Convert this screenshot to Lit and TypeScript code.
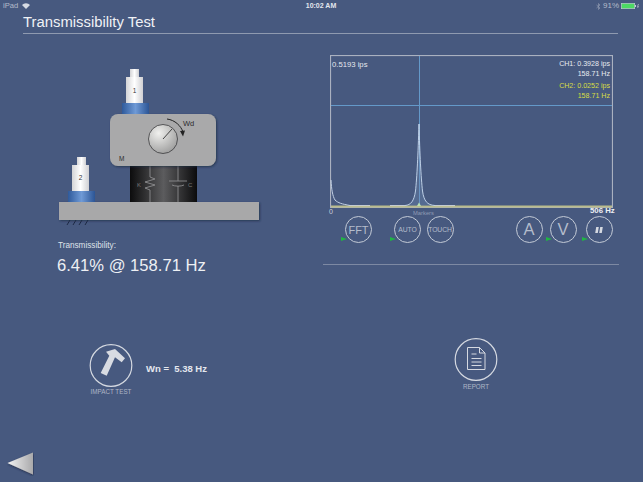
import { LitElement, html, css } from "lit";
import { customElement } from "lit/decorators.js";

const SANS = `"Liberation Sans", Arial, sans-serif`;

@customElement("app-root")
export class AppRoot extends LitElement {
  static styles = css`
    :host { display: block; width: 643px; height: 482px; background: #47597f; color: #fff; font-family: "Liberation Sans", Arial, sans-serif; overflow: hidden; position: relative; }
    .status { height: 12px; display: grid; grid-template-columns: 1fr auto 1fr; align-items: center; padding: 0 4px 0 3px; font-size: 7.6px; color: #b4bccb; line-height: 12px; }
    .status .l { display: flex; align-items: center; gap: 4px; }
    .status .c { color: #e4e7ee; font-weight: 700; font-size: 7px; }
    .status .r { display: flex; justify-content: flex-end; align-items: center; gap: 2px; }
    .status .pct { font-size: 8px; }
    .header { margin: 0 25px 0 23px; height: 21px; border-bottom: 1px solid #8f9ab0; font-size: 14.85px; line-height: 20px; color: #f0f2f6; }
    .main { display: grid; grid-template-columns: 323px 296px; }
    .left { display: flex; flex-direction: column; }
    .diagram { display: block; margin: 26px 0 0 50px; }
    .t-label { margin: 11px 0 0 58px; font-size: 8.2px; line-height: 10px; color: #dfe3ea; }
    .t-val { margin: 5px 0 0 57px; font-size: 16.6px; line-height: 20px; color: #eef0f4; }
    .impact { margin: 68px 0 0 89px; display: flex; align-items: center; }
    .impact .col { width: 44px; display: flex; flex-direction: column; align-items: center; }
    .cap { font-size: 6.3px; line-height: 8px; color: #aeb6c6; white-space: nowrap; margin-top: 1px; }
    .report .cap { margin-top: 2px; }
    .wn { margin: -3px 0 0 13px; font-size: 9.5px; font-weight: 700; color: #e4e7ee; white-space: pre; }
    .back { display: block; margin: 56px 0 0 7px; }
    .right { display: flex; flex-direction: column; }
    .chart { margin: 21px 0 0 7px; position: relative; width: 283px; height: 153px; }
    .chart svg { display: block; }
    .peak { position: absolute; left: 2px; top: 5px; font-size: 7.7px; color: #e4e7ee; }
    .read { position: absolute; right: 3px; top: 5px; text-align: right; font-size: 7.1px; line-height: 9.5px; color: #e8ebf0; }
    .read .y { margin-top: 3px; color: #d7dd45; }
    .axis { position: relative; height: 8px; font-size: 7px; line-height: 8px; width: 296px; }
    .axis span { position: absolute; top: 0; }
    .axis .zero { left: 6px; color: #c8cedb; }
    .axis .mk { left: 90px; font-size: 5.8px; top: 1px; color: #8f9bb4; }
    .axis .max { left: 267px; font-size: 7.8px; font-weight: 700; color: #eef0f4; top: -1px; white-space: nowrap; }
    .btns { display: flex; margin: 0 0 0 22px; height: 27px; }
    .rb { position: relative; box-sizing: border-box; width: 27px; height: 27px; border: 1.2px solid #c3cad6; border-radius: 50%; display: flex; align-items: center; justify-content: center; color: #b4bccb; flex: none; }
    .rb.lg { font-size: 11px; }
    .rb.sm { font-size: 6.8px; letter-spacing: -0.1px; white-space: nowrap; }
    .rb.xl { font-size: 16.5px; }
    .led { position: absolute; left: -5px; bottom: 1px; width: 0; height: 0; border-left: 6px solid #20b544; border-top: 2.5px solid transparent; border-bottom: 2.5px solid transparent; }
    .g1 { margin-left: 22px; }
    .g2 { margin-left: 5.5px; }
    .g3 { margin-left: 62px; }
    .g4 { margin-left: 7px; }
    .g5 { margin-left: 9px; }
    .rule { margin-top: 21px; width: 296px; height: 1px; background: #7d89a3; }
    .report { margin: 73px 0 0 131px; width: 44px; display: flex; flex-direction: column; align-items: center; }
  `;

  private diagram() {
    return html`<svg class="diagram" width="220" height="170" viewBox="50 60 220 170" font-family=${SANS}>
      <defs>
        <linearGradient id="cyl" x1="0" x2="1" y1="0" y2="0"><stop offset="0" stop-color="#0c0c0d"/><stop offset="0.5" stop-color="#5c5c5e"/><stop offset="1" stop-color="#0b0b0c"/></linearGradient>
        <linearGradient id="blue" x1="0" x2="1" y1="0" y2="0"><stop offset="0" stop-color="#2f5a9b"/><stop offset="0.5" stop-color="#6f9ad6"/><stop offset="1" stop-color="#2c5595"/></linearGradient>
        <linearGradient id="white" x1="0" x2="1" y1="0" y2="0"><stop offset="0" stop-color="#d4d4d6"/><stop offset="0.5" stop-color="#ffffff"/><stop offset="1" stop-color="#d0d0d3"/></linearGradient>
        <radialGradient id="dial" cx="0.35" cy="0.3" r="0.9"><stop offset="0" stop-color="#f0f0ee"/><stop offset="1" stop-color="#8e8e8e"/></radialGradient>
        <filter id="sh" x="-5%" y="-5%" width="110%" height="125%"><feDropShadow dx="1" dy="1" stdDeviation="1" flood-color="#1c2640" flood-opacity="0.7"/></filter>
      </defs>
      <g stroke="#1e2a44" stroke-width="1"><path d="M67 225l3-5M73 225l3-5M79 225l3-5M85 225l3-5"/></g>
      <rect x="59" y="202" width="200" height="18" fill="#a8a8a9" filter="url(#sh)"/>
      <rect x="130" y="166" width="67" height="36" fill="url(#cyl)"/>
      <path d="M150 166v11l5 2-10 3 10 3-10 3 5 2v12M178 166v15M169 181h18M172 185c3 1.500 9 1.500 12 0M178 186v16" fill="none" stroke="#8c8c8e" stroke-width="0.9"/>
      <text x="137" y="186.500" font-size="6" fill="#777">K</text>
      <text x="188" y="187" font-size="6" fill="#777">C</text>
      <rect x="110" y="114" width="106" height="52" rx="8" fill="#a9a9aa" filter="url(#sh)"/>
      <circle cx="163" cy="139" r="14.500" fill="url(#dial)" stroke="#3a3a3c" stroke-width="0.8"/>
      <path d="M163 139l9-10" stroke="#333" stroke-width="0.9"/>
      <path d="M167 119c8 1 14 7 16 13" fill="none" stroke="#222" stroke-width="1"/>
      <path d="M180 131l5-.5-2 6z" fill="#222"/>
      <text x="183" y="126" font-size="7.500" fill="#2c2c2e">Wd</text>
      <text x="119" y="161" font-size="6.500" fill="#2c2c2e">M</text>
      <rect x="122" y="103" width="27" height="11" fill="url(#blue)"/>
      <rect x="126" y="77" width="17" height="26" fill="url(#white)"/>
      <rect x="130" y="69" width="9" height="8" fill="url(#white)"/>
      <text x="134.500" y="92.500" font-size="6.500" fill="#333" text-anchor="middle">1</text>
      <rect x="68" y="191" width="27" height="11" fill="url(#blue)"/>
      <rect x="72" y="165" width="17" height="26" fill="url(#white)"/>
      <rect x="77" y="157" width="9" height="8" fill="url(#white)"/>
      <text x="80.500" y="179.500" font-size="6.500" fill="#333" text-anchor="middle">2</text>
    </svg>`;
  }

  private chart() {
    const left = "M1 125C1.500 134 2.500 141 5 145C8 148 12 149 20 150.500";
    const peak = "M75 150.500C81 150 84 146 85.500 136C87 122 88 100 89 69C89.800 100 91 122 92.500 136C94 146 97 150 105 150.500";
    return html`<div class="chart">
      <svg width="283" height="153" viewBox="0 0 283 153">
        <rect x="0.500" y="0.500" width="282" height="152" fill="none" stroke="#aab1c0" stroke-width="1.200"/>
        <path d="M89.500 1V152M1 50.500H282" stroke="#6499c9" stroke-width="1" fill="none"/>
        <path d="M1 151.500H282" stroke="#b9bc8c" stroke-width="1.800"/>
        <path d="M20 150.600H40M60 150.600H75M105 150.600H125" stroke="#dfe4ec" stroke-width="0.800"/>
        <path d=${left} fill="none" stroke="#c4d2e6" stroke-width="1"/>
        <path d=${peak} fill="#6f8bb5" fill-opacity="0.35" stroke="#c9dbf0" stroke-width="0.900"/>
        <path d="M87 151l2-3.500 2 3.500z" fill="#b8e0b0"/>
      </svg>
      <div class="peak">0.5193 ips</div>
      <div class="read">
        <div>CH1: 0.3928 ips<br />158.71 Hz</div>
        <div class="y">CH2: 0.0252 ips<br />158.71 Hz</div>
      </div>
    </div>`;
  }

  render() {
    return html`
      <div class="status">
        <div class="l"><span>iPad</span>
          <svg width="8" height="6" viewBox="0 0 8 6"><path d="M0 2a5.500 5.500 0 0 1 8 0L4 6z" fill="#d6dbe4"/></svg>
        </div>
        <div class="c">10:02 AM</div>
        <div class="r">
          <svg width="5" height="7" viewBox="0 0 5 7"><path d="M0.500 2l3.500 3-1.500 1.500v-6L4 2 0.500 5" fill="none" stroke="#8f9ab0" stroke-width="0.700"/></svg>
          <span class="pct">91%</span>
          <svg width="18" height="6" viewBox="0 0 18 6"><rect x="0.300" y="0.300" width="13.400" height="5.400" fill="#4cd964" stroke="#c8ceda" stroke-width="0.600"/><rect x="14" y="2" width="1" height="2" fill="#c8ceda"/><path d="M17.500 1l-1 2.500h1l-1 1.500" stroke="#d6dbe4" stroke-width="0.600" fill="none"/></svg>
        </div>
      </div>
      <div class="header">Transmissibility Test</div>
      <div class="main">
        <div class="left">
          ${this.diagram()}
          <div class="t-label">Transmissibility:</div>
          <div class="t-val">6.41% @ 158.71 Hz</div>
          <div class="impact">
            <div class="col">
              <svg width="44" height="43" viewBox="0 0 44 43">
                <circle cx="22" cy="21.500" r="20.800" fill="none" stroke="#d5d9e1" stroke-width="1.200"/>
                <path d="M17 7.700L26 5L36 14.300L32.700 18.300L26 13.300L17.700 31.700L11.700 29L20.300 11.700z" fill="#d8dbe2"/>
              </svg>
              <div class="cap">IMPACT TEST</div>
            </div>
            <div class="wn">Wn =  5.38 Hz</div>
          </div>
          <svg class="back" width="27" height="24" viewBox="0 0 27 24">
            <defs><linearGradient id="ar" x1="0" x2="1"><stop offset="0" stop-color="#f4f4f4"/><stop offset="1" stop-color="#a9a9ab"/></linearGradient>
            <filter id="as" x="-20%" y="-20%" width="140%" height="140%"><feDropShadow dx="0.500" dy="1" stdDeviation="0.800" flood-color="#18223a" flood-opacity="0.8"/></filter></defs>
            <path d="M0.500 11L26 0.500V22.500z" fill="url(#ar)" filter="url(#as)"/>
          </svg>
        </div>
        <div class="right">
          ${this.chart()}
          <div class="axis"><span class="zero">0</span><span class="mk">Markers</span><span class="max">506 Hz</span></div>
          <div class="btns">
            <div class="rb lg">FFT<i class="led"></i></div>
            <div class="rb sm g1">AUTO<i class="led"></i></div>
            <div class="rb sm g2">TOUCH</div>
            <div class="rb xl g3">A</div>
            <div class="rb xl g4">V<i class="led"></i></div>
            <div class="rb g5"><svg width="8" height="6" viewBox="0 0 8 6"><path d="M1.200 0h2.600L2.800 6H0.200zM5.200 0h2.600L6.800 6H4.200z" fill="#d5d9e1"/></svg><i class="led"></i></div>
          </div>
          <div class="rule"></div>
          <div class="report">
            <svg width="44" height="43" viewBox="0 0 44 43">
              <circle cx="22" cy="21.500" r="20.800" fill="none" stroke="#d5d9e1" stroke-width="1.200"/>
              <path d="M13.500 9.500h12l5.500 5.500v16.500h-17.500zM25.500 9.500v5.500h5.500" fill="none" stroke="#d5d9e1" stroke-width="1"/>
              <path d="M17.500 16h5M17.500 20.500h10M17.500 24h10M17.500 27.500h10" stroke="#d5d9e1" stroke-width="1"/>
            </svg>
            <div class="cap">REPORT</div>
          </div>
        </div>
      </div>
    `;
  }
}
